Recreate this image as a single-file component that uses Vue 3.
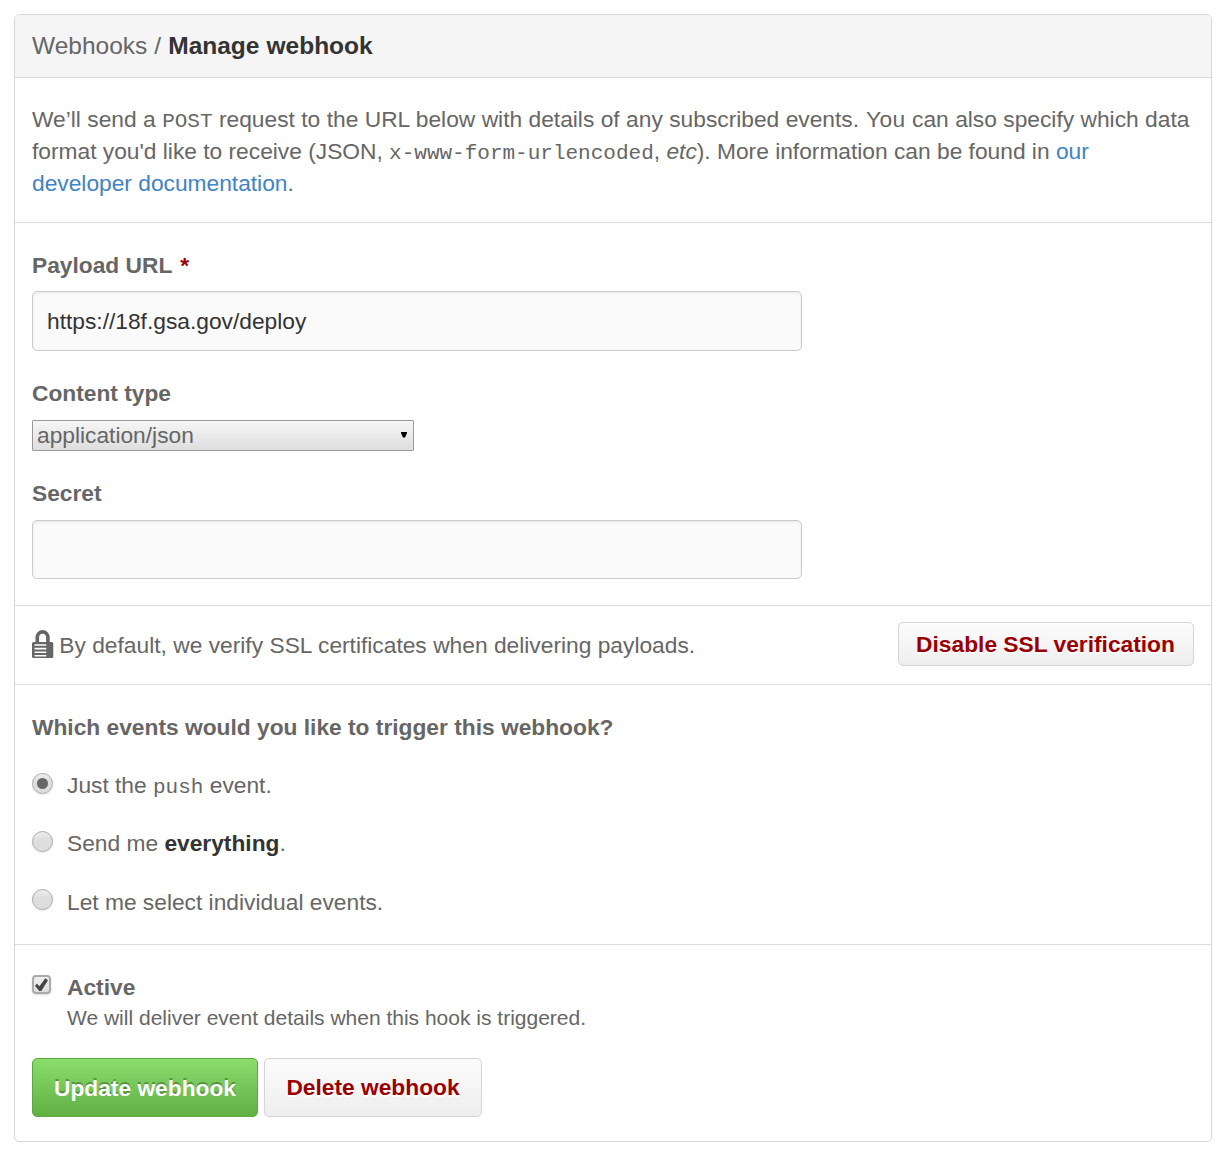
<script setup>
import { ref } from 'vue'

const payloadUrl = ref('https://18f.gsa.gov/deploy')
const secret = ref('')
const selected = ref('push')
</script>

<template>
  <main class="panel">
    <header class="panel-head">Webhooks / <strong>Manage webhook</strong></header>

    <section class="intro">
      <p>
        <span class="lead">We’ll send a <code>POST</code> request to the URL below with details of any subscribed events. <span class="you">You</span> can also specify which data</span> format you'd like to receive (JSON, <code>x-www-form-urlencoded</code>, <em>etc</em>). More information can be found in <a href="#">our developer documentation</a>.
      </p>
    </section>

    <section class="fields">
      <label class="label" for="url">Payload URL <span class="required">*</span></label>
      <input id="url" v-model="payloadUrl" class="input" type="text" />
      <label class="label">Content type</label>
      <div class="select">
        <span>application/json</span>
        <svg width="6" height="6" viewBox="0 0 6 6"><path d="M0 0h6v1L4 5.5H2L0 1z" /></svg>
      </div>
      <label class="label" for="secret">Secret</label>
      <input id="secret" v-model="secret" class="input short" type="text" />
    </section>

    <section class="ssl">
      <svg class="lock" width="22" height="28" viewBox="0 0 22 28">
        <path d="M5.3 13V7.5a5.3 5.6 0 0 1 10.6 0V13" fill="none" stroke="#666" stroke-width="3.6" />
        <rect x="0" y="12" width="21.3" height="16" rx="1.6" fill="#666" />
        <path d="M2.5 15h11.8M2.5 18.6h11.8M2.5 22.2h11.8M2.5 25.8h11.8" stroke="#fff" stroke-width="1.6" />
      </svg>
      <span class="ssl-text">By default, we verify SSL certificates when delivering payloads.</span>
      <button class="btn small danger">Disable SSL verification</button>
    </section>

    <section class="events">
      <h2>Which events would you like to trigger this webhook?</h2>
      <div class="option" @click="selected = 'push'">
        <i class="radio" :class="{ on: selected === 'push' }"></i>
        <span>Just the <code>push</code> event.</span>
      </div>
      <div class="option" @click="selected = 'all'">
        <i class="radio" :class="{ on: selected === 'all' }"></i>
        <span>Send me <strong>everything</strong>.</span>
      </div>
      <div class="option last" @click="selected = 'some'">
        <i class="radio" :class="{ on: selected === 'some' }"></i>
        <span>Let me select individual events.</span>
      </div>
    </section>

    <section class="active">
      <div class="active-row">
        <span class="check">
          <svg width="15" height="15" viewBox="0 0 15 15"><path d="M1 8.7L2.9 6.7L5.5 9.3L11.3 1.3L14 3.3L7.3 14H5.3z" fill="#444" /></svg>
        </span>
        <div>
          <div class="active-label">Active</div>
          <p class="note">We will deliver event details when this hook is triggered.</p>
        </div>
      </div>
      <div class="actions">
        <button class="btn primary">Update webhook</button>
        <button class="btn danger">Delete webhook</button>
      </div>
    </section>
  </main>
</template>

<style>
body {
  background: #fff;
}
</style>

<style scoped>
* {
  box-sizing: border-box;
}
.panel {
  margin: 14px 12px 14px 14px;
  width: 1198px;
  height: 1128px;
  border: 1px solid #d8d8d8;
  border-radius: 5px;
  overflow: hidden;
  font: 22.75px/32px "Liberation Sans", Arial, sans-serif;
  color: #666;
  background: #fff;
}
.panel-head {
  height: 63px;
  padding: 0 17px;
  font-size: 24.5px;
  line-height: 61px;
  word-spacing: 0.25px;
  background: #f5f5f5;
  border-bottom: 1px solid #d8d8d8;
}
strong {
  color: #333;
}
section {
  padding: 0 17px;
  border-bottom: 1px solid #ddd;
}
section:last-child {
  border-bottom: 0;
}
p,
h2 {
  margin: 0;
}
code {
  font: 21px/1 "Liberation Mono", monospace;
}
a {
  color: #4183c4;
  text-decoration: none;
}
.intro {
  height: 145px;
  padding-top: 25px;
}
.lead {
  word-spacing: 0.1px;
}
.you {
  margin-left: 0.6px;
  letter-spacing: 0.4px;
}
.fields {
  display: flex;
  flex-direction: column;
  align-items: flex-start;
  height: 383px;
  padding-top: 26px;
}
.label {
  font-weight: bold;
  margin-bottom: 11px;
}
.label:first-child {
  margin-bottom: 10px;
}
.required {
  margin-left: 2px;
  color: #990000;
}
.input {
  width: 770px;
  height: 60px;
  margin: 0 0 26px;
  padding: 0 14px;
  font: 22.75px "Liberation Sans", Arial, sans-serif;
  color: #333;
  background: #fafafa;
  border: 1px solid #ccc;
  border-radius: 5px;
  box-shadow: inset 0 1px 3px rgba(0, 0, 0, 0.075);
  outline: none;
}
.input.short {
  height: 59px;
}
.select {
  display: flex;
  align-items: center;
  justify-content: space-between;
  width: 382px;
  height: 31px;
  margin-bottom: 26px;
  padding: 0 6px 0 4px;
  line-height: 29px;
  border: 1px solid #999;
  border-radius: 1px;
  background: linear-gradient(#f6f6f6, #dedede);
}
.select svg {
  margin-bottom: 2px;
  fill: #000;
}
.ssl {
  display: flex;
  align-items: center;
  height: 79px;
}
.lock {
  margin: 0 5.25px 2px 0;
}
.ssl-text {
  flex: 1;
  word-spacing: 0.08px;
}
.btn {
  height: 59px;
  padding: 0;
  font: bold 22.75px "Liberation Sans", Arial, sans-serif;
  border: 1px solid #d5d5d5;
  border-radius: 5px;
  background: linear-gradient(#fcfcfc, #eee);
  text-shadow: 0 2px 0 rgba(255, 255, 255, 0.9);
}
.btn.danger {
  width: 218px;
  color: #900;
}
.btn.small {
  width: 296px;
  height: 44px;
  margin-bottom: 2px;
  padding-right: 1px;
}
.btn.primary {
  width: 226px;
  padding-top: 2px;
  color: #fff;
  background: linear-gradient(#8add6d, #60b044);
  border-color: #5ca941;
  text-shadow: 0 -2px 0 rgba(0, 0, 0, 0.3);
}
.events {
  height: 260px;
  padding-top: 26px;
}
h2 {
  font-size: 22.75px;
  line-height: 32px;
  margin-bottom: 26px;
}
.option {
  display: flex;
  height: 58px;
}
.radio {
  display: flex;
  align-items: center;
  justify-content: center;
  width: 21px;
  height: 21px;
  margin: 4px 14px 0 0;
  border: 1px solid #aaa;
  border-radius: 50%;
  background: linear-gradient(#eee, #dedede 40%, #ddd);
  box-shadow: 0 1px 2px rgba(0, 0, 0, 0.1);
}
.radio.on::after {
  content: "";
  width: 11px;
  height: 11px;
  border-radius: 50%;
  background: #666;
}
.option.last span {
  margin-top: 1px;
}
.active {
  padding-top: 26px;
}
.active-row {
  display: flex;
}
.check {
  display: flex;
  align-items: center;
  justify-content: center;
  width: 19px;
  height: 19px;
  margin: 4px 16px 0 0;
  border: 2px solid #aaa;
  border-radius: 4px;
  background: linear-gradient(#eee, #ddd);
  box-shadow: 0 1px 2px rgba(0, 0, 0, 0.15);
}
.check svg {
  flex: none;
}
.active-label {
  font-weight: bold;
}
.note {
  font-size: 21px;
  line-height: 30px;
}
.actions {
  display: flex;
  gap: 6px;
  margin-top: 25px;
}
</style>
